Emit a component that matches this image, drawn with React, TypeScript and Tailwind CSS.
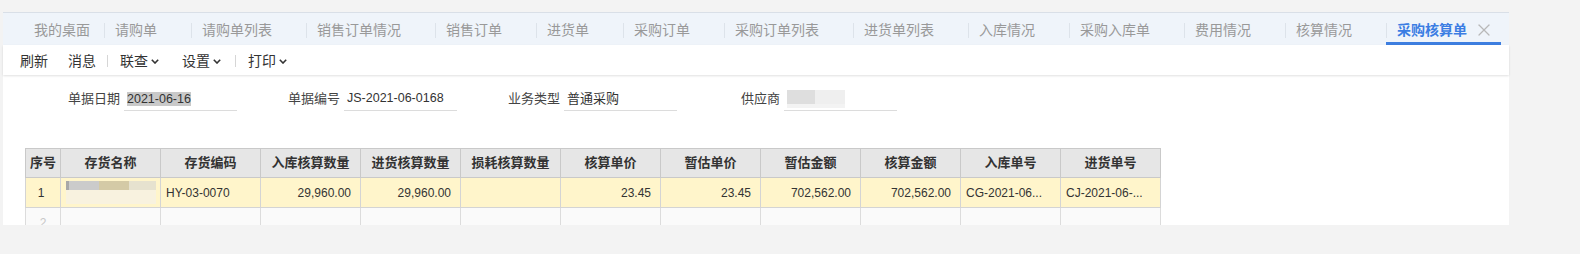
import { X } from "lucide-react";

const TABS = ["我的桌面", "请购单", "请购单列表", "销售订单情况", "销售订单", "进货单", "采购订单", "采购订单列表", "进货单列表", "入库情况", "采购入库单", "费用情况", "核算情况"];

const COLS = ["序号", "存货名称", "存货编码", "入库核算数量", "进货核算数量", "损耗核算数量", "核算单价", "暂估单价", "暂估金额", "核算金额", "入库单号", "进货单号"];

const ROW = ["1", "", "HY-03-0070", "29,960.00", "29,960.00", "", "23.45", "23.45", "702,562.00", "702,562.00", "CG-2021-06...", "CJ-2021-06-..."];
const ALIGN = ["text-center", "text-left", "text-left", "text-right", "text-right", "text-right", "text-right", "text-right", "text-right", "text-right", "text-left", "text-left"];

function Chevron() {
  return (
    <svg width="8" height="5" viewBox="0 0 8 5" className="ml-[3px] mt-[1px]">
      <path d="M0.8 0.8 L4 4 L7.2 0.8" fill="none" stroke="#333" strokeWidth="1.6" />
    </svg>
  );
}

function ToolSep() {
  return <span className="ml-[1px] mr-[2px] h-[12px] w-px bg-[#d6d6d6]" />;
}

function NameBlur() {
  return (
    <svg width="90" height="24" viewBox="0 0 90 24" className="block">
      <rect x="0" y="0" width="3" height="9" fill="#a8a8a8" />
      <rect x="3" y="0" width="30" height="9" fill="#cbcbcb" />
      <rect x="33" y="0" width="30" height="9" fill="#d4caa6" />
      <rect x="63" y="0" width="27" height="9" fill="#e6e2cf" />
      <rect x="0" y="9" width="90" height="14" fill="#f8f2df" />
    </svg>
  );
}

function SupplierBlur() {
  return (
    <svg width="58" height="18" viewBox="0 0 58 18" className="block">
      <rect x="0" y="0" width="28" height="14" fill="#dedede" />
      <rect x="28" y="0" width="30" height="14" fill="#efefef" />
      <rect x="0" y="14" width="58" height="4" fill="#f3f3f3" />
    </svg>
  );
}

function Field({ label, children }: { label: string; children: React.ReactNode }) {
  return (
    <div className="mr-[7px] flex w-[213px] items-center">
      <span className="w-[96px] text-right text-[13px] leading-[16px] text-[#444]">{label}</span>
      <div className="ml-[4px] flex h-[24px] w-[113px] items-center border-b border-[#dcdcdc] pl-[3px] text-[12.5px] text-[#333]">
        {children}
      </div>
    </div>
  );
}

export default function App() {
  return (
    <div className="min-h-screen bg-[#f3f3f3] pl-[3px] pt-[12px] font-['Liberation_Sans','Noto_Sans_CJK_SC',sans-serif]">
      <div className="w-[1506px] bg-white">
        {/* tabs */}
        <div className="flex h-[33px] border-t border-[#d9dfe7] bg-[#eff4fa] text-[14px] leading-[16px]">
          <div className="flex items-center border-b-[3px] border-transparent pl-[31px] pr-[14px] pt-[5px] text-[#999]">
            {TABS[0]}
          </div>
          {TABS.slice(1).map((t) => (
            <div key={t} className="flex items-center border-b-[3px] border-transparent pt-[5px] text-[#999]">
              <span className="h-[15px] w-px bg-[#dde3ea]" />
              <span className="pl-[10px] pr-[34px]">{t}</span>
            </div>
          ))}
          <div className="flex items-center border-b-[3px] border-[#3d7ee0] pt-[5px]">
            <span className="h-[15px] w-px bg-[#dde3ea]" />
            <span className="pl-[10px] font-bold text-[#3b7de3]">采购核算单</span>
            <X className="ml-[7px] mr-[7px] h-[20px] w-[20px] text-[#b8b8b8]" strokeWidth={1.5} />
          </div>
        </div>

        {/* toolbar */}
        <div className="relative z-10 flex h-[30px] items-center bg-white pl-[7px] pt-[2px] text-[14px] leading-[16px] text-[#333] shadow-[0_1px_2px_rgba(0,0,0,0.12)]">
          <span className="px-[10px]">刷新</span>
          <span className="px-[10px]">消息</span>
          <ToolSep />
          <span className="flex items-center pl-[10px] pr-[13px]">联查<Chevron /></span>
          <span className="flex items-center pl-[10px] pr-[13px]">设置<Chevron /></span>
          <ToolSep />
          <span className="flex items-center pl-[10px] pr-[13px]">打印<Chevron /></span>
        </div>

        {/* content */}
        <div className="h-[150px] overflow-hidden pl-[21px] pt-[12px]">
          <div className="flex">
            <Field label="单据日期">
              <span className="bg-[#c9c9c9] leading-[14px]">2021-06-16</span>
            </Field>
            <Field label="单据编号">JS-2021-06-0168</Field>
            <Field label="业务类型">
              <span className="text-[13px]">普通采购</span>
            </Field>
            <Field label="供应商">
              <SupplierBlur />
            </Field>
          </div>

          <table className="ml-[1px] mt-[37px] w-[1135px] table-fixed border-collapse text-[12px] text-[#333]">
            <colgroup>
              <col className="w-[35px]" />
              {COLS.slice(1).map((c) => (
                <col key={c} className="w-[100px]" />
              ))}
            </colgroup>
            <thead>
              <tr className="h-[29px] bg-[#e6e6e6]">
                {COLS.map((c) => (
                  <th key={c} className="border border-[#c9c9c9] p-0 text-center text-[13px] font-bold leading-[16px] text-[#333]">
                    {c}
                  </th>
                ))}
              </tr>
            </thead>
            <tbody>
              <tr className="h-[30px] bg-[#fff5cb]">
                {ROW.map((v, i) => (
                  <td key={i} className={`overflow-hidden whitespace-nowrap border border-[#d4d4d4] py-0 pl-[5px] pr-[9px] leading-[16px] ${ALIGN[i]}`}>
                    {i === 1 ? <NameBlur /> : v}
                  </td>
                ))}
              </tr>
              <tr className="h-[30px] bg-[#fafafa]">
                {COLS.map((c, i) => (
                  <td key={c} className="border border-[#dcdcdc] p-0 text-center align-top leading-[16px] text-[#c8c8c8]">
                    <div className="pt-[7px]">{i === 0 ? "2" : ""}</div>
                  </td>
                ))}
              </tr>
            </tbody>
          </table>
        </div>
      </div>
    </div>
  );
}
